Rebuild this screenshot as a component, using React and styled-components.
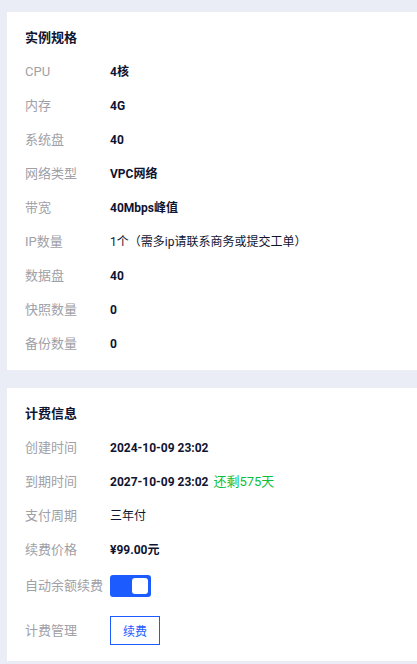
import React, { useState } from "react";
import styled, { createGlobalStyle } from "styled-components";

const Global = createGlobalStyle`
  html, body { margin: 0; padding: 0; background: #eaedf5; }
  body { font-family: Roboto, "Noto Sans CJK SC", sans-serif; }
  * { box-sizing: border-box; }
`;

const Page = styled.div`
  padding: 12px 0 0 7px;
  display: flex;
  flex-direction: column;
  gap: 18px;
  min-height: 664px;
`;

const Card = styled.section`
  background: #fff;
  padding: 18px 18px ${(p) => p.$pb || 16}px;
  display: flex;
  flex-direction: column;
  gap: 14px;
`;

const Title = styled.h3`
  margin: 0 0 2px;
  font-size: 13px;
  line-height: 16px;
  font-weight: 700;
  color: #0f1430;
`;

const Row = styled.div`
  display: flex;
  align-items: center;
  min-height: ${(p) => p.$h || 20}px;
  margin-top: ${(p) => p.$mt || 0}px;
  font-size: 13px;
  line-height: 20px;
`;

const Label = styled.span`
  width: 85px;
  flex-shrink: 0;
  color: #a0a0a6;
  white-space: nowrap;
`;

const Value = styled.span`
  color: #0f1430;
  font-size: 12px;
  font-weight: ${(p) => (p.$normal ? 400 : 700)};
  white-space: nowrap;
`;

const Remain = styled.span`
  color: #0bbf3c;
  margin-left: 5px;
  font-size: 13px;
`;

const Switch = styled.button`
  width: 41px;
  height: 22px;
  border: none;
  border-radius: 3px;
  background: ${(p) => (p.$on ? "#1c5cff" : "#c5c8d0")};
  padding: 3px;
  display: flex;
  justify-content: ${(p) => (p.$on ? "flex-end" : "flex-start")};
  cursor: pointer;
`;

const Knob = styled.span`
  width: 16px;
  height: 16px;
  border-radius: 3px;
  background: #fff;
`;

const Btn = styled.button`
  width: 50px;
  height: 29px;
  border: 1px solid #1c5cff;
  background: #fff;
  color: #1c5cff;
  font-size: 12px;
  font-family: inherit;
  padding: 0;
  cursor: pointer;
`;

const specs = [
  ["CPU", "4核"],
  ["内存", "4G"],
  ["系统盘", "40"],
  ["网络类型", "VPC网络"],
  ["带宽", "40Mbps峰值"],
  ["IP数量", "1个（需多ip请联系商务或提交工单）", true],
  ["数据盘", "40"],
  ["快照数量", "0"],
  ["备份数量", "0"],
];

export default function App() {
  const [on, setOn] = useState(true);
  return (
    <>
      <Global />
      <Page>
        <Card>
          <Title>实例规格</Title>
          {specs.map(([k, v, n]) => (
            <Row key={k}>
              <Label>{k}</Label>
              <Value $normal={n}>{v}</Value>
            </Row>
          ))}
        </Card>
        <Card>
          <Title>计费信息</Title>
          <Row>
            <Label>创建时间</Label>
            <Value>2024-10-09 23:02</Value>
          </Row>
          <Row>
            <Label>到期时间</Label>
            <Value>2027-10-09 23:02</Value>
            <Remain>还剩575天</Remain>
          </Row>
          <Row>
            <Label>支付周期</Label>
            <Value $normal>三年付</Value>
          </Row>
          <Row>
            <Label>续费价格</Label>
            <Value>¥99.00元</Value>
          </Row>
          <Row $h={24}>
            <Label>自动余额续费</Label>
            <Switch $on={on} onClick={() => setOn(!on)}>
              <Knob />
            </Switch>
          </Row>
          <Row $h={29} $mt={4}>
            <Label>计费管理</Label>
            <Btn>续费</Btn>
          </Row>
        </Card>
      </Page>
    </>
  );
}
